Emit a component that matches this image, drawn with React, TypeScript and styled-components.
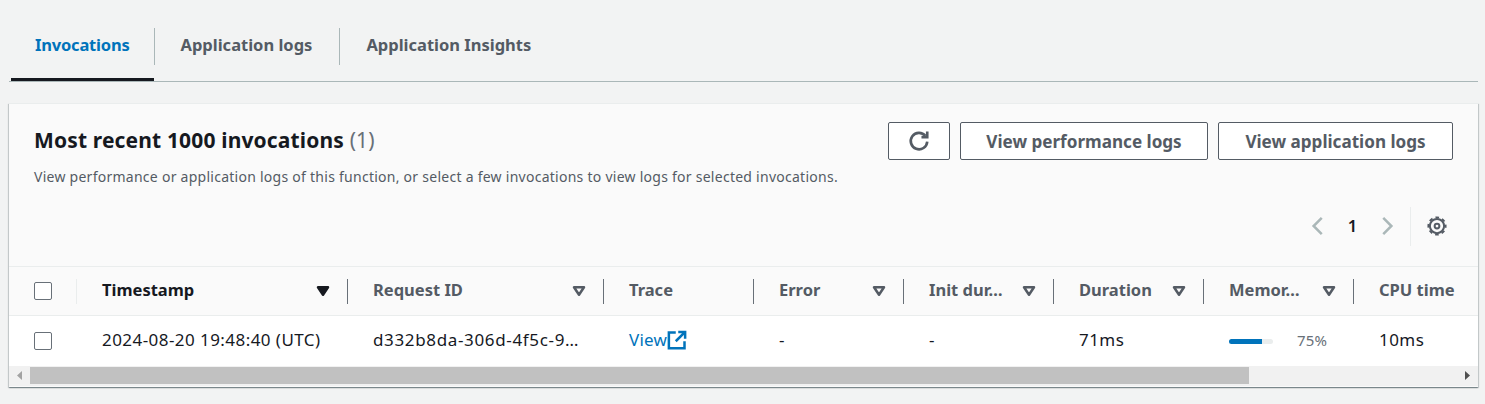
import React from "react";
import styled, { createGlobalStyle } from "styled-components";

const Global = createGlobalStyle`
  html, body { margin: 0; padding: 0; background: #f2f3f3; overflow: hidden; }
  body { font-family: "Noto Sans", "Open Sans", sans-serif; color: #16191f; }
  * { box-sizing: border-box; }
`;

const Page = styled.div`
  width: 1485px;
  height: 404px;
  padding: 28px 7px 0 9px;
`;

const TabBar = styled.div`
  display: flex;
  height: 54px;
  border-bottom: 1px solid #aab7b8;
  padding-left: 2px;
  margin-bottom: 21px;
`;

const Tab = styled.div<{ $active?: boolean; $last?: boolean }>`
  height: 53px;
  padding: 0 ${(p) => (p.$active ? 24 : 27)}px;
  line-height: 34px;
  font-size: 16.5px;
  font-weight: 700;
  letter-spacing: ${(p) => (p.$active ? -0.2 : 0)}px;
  white-space: nowrap;
  color: ${(p) => (p.$active ? "#0073bb" : "#545b64")};
  position: relative;
  border-bottom: 3px solid ${(p) => (p.$active ? "#16191f" : "transparent")};
  &::after {
    content: "";
    display: ${(p) => (p.$last ? "none" : "block")};
    position: absolute;
    right: -1px;
    top: 0;
    height: 37px;
    width: 1px;
    background: #aab7b8;
  }
`;

const Panel = styled.section`
  height: 284px;
  width: 1469px;
  background: #fafafa;
  box-shadow: 0 1px 1px 0 rgba(0, 28, 36, 0.3), 1px 1px 1px 0 rgba(0, 28, 36, 0.15), -1px 1px 1px 0 rgba(0, 28, 36, 0.15);
  border-top: 1px solid #eaeded;
  display: flex;
  flex-direction: column;
`;

const Head = styled.div`
  height: 163px;
  padding: 18px 25px 0 25px;
  border-bottom: 1px solid #eaeded;
`;

const HeadTop = styled.div`
  display: flex;
  justify-content: space-between;
  align-items: flex-start;
`;

const TitleBlock = styled.div`
  padding-top: 4px;
`;

const Title = styled.h2`
  margin: 0;
  font-size: 21px;
  line-height: 28px;
  font-weight: 700;
  letter-spacing: 0.15px;
  color: #16191f;
`;

const Count = styled.span`
  font-weight: 400;
  color: #687078;
`;

const Description = styled.p`
  margin: 15px 0 0;
  font-size: 14px;
  line-height: 16px;
  letter-spacing: 0.26px;
  color: #545b64;
`;

const Actions = styled.div`
  display: flex;
  gap: 10px;
`;

const Button = styled.button<{ $w: number }>`
  width: ${(p) => p.$w}px;
  height: 38px;
  border: 1px solid #545b64;
  border-radius: 2px;
  background: #fff;
  color: #545b64;
  font-family: inherit;
  font-size: 17.1px;
  font-weight: 700;
  padding: 0;
  display: flex;
  align-items: center;
  justify-content: center;
`;

const Tools = styled.div`
  display: flex;
  justify-content: flex-end;
  align-items: center;
  height: 39px;
  padding-bottom: 2px;
  margin: 22px 6px 0 0;
  color: #16191f;
`;

const PageNumber = styled.span`
  font-size: 16.5px;
  font-weight: 600;
  width: 49px;
  text-align: center;
`;

const ToolDivider = styled.span`
  align-self: flex-start;
  width: 1px;
  height: 39px;
  background: #eaeded;
  margin: 0 16px 0 13px;
`;

const Row = styled.div<{ $head?: boolean }>`
  display: grid;
  grid-template-columns: 68px 271px 256px 150px 150px 150px 150px 150px 1fr;
  height: ${(p) => (p.$head ? 49 : 50)}px;
  background: ${(p) => (p.$head ? "#fafafa" : "#fff")};
  border-bottom: ${(p) => (p.$head ? "1px solid #eaeded" : "none")};
  align-items: center;
`;

const HeadCell = styled.div<{ $active?: boolean; $noLine?: boolean }>`
  height: 25px;
  padding: 0 14px 0 25px;
  display: flex;
  align-items: center;
  justify-content: space-between;
  font-size: 16.5px;
  font-weight: 700;
  white-space: nowrap;
  color: ${(p) => (p.$active ? "#16191f" : "#545b64")};
  border-right: ${(p) => (p.$noLine ? "none" : "1px solid #687078")};
`;

const HeadLabel = styled.span`
  margin-bottom: 4px;
`;

const CheckCell = styled.div<{ $line?: boolean }>`
  height: 25px;
  padding-left: 25px;
  display: flex;
  align-items: center;
  border-right: ${(p) => (p.$line ? "1px solid #eaeded" : "none")};
`;

const Checkbox = styled.span`
  display: block;
  width: 18px;
  height: 18px;
  background: #fff;
  border: 1px solid #687078;
  border-radius: 2px;
`;

const Cell = styled.div<{ $spacing?: number }>`
  padding: 0 0 2px 25px;
  font-size: 17px;
  line-height: 24px;
  letter-spacing: ${(p) => p.$spacing ?? 0.44}px;
  color: #16191f;
  white-space: nowrap;
`;

const TraceLink = styled.a`
  display: inline-flex;
  align-items: center;
  color: #0073bb;
  letter-spacing: 0.2px;
`;

const MemoryCell = styled.div`
  display: flex;
  align-items: center;
  padding-left: 25px;
`;

const Track = styled.div`
  width: 44px;
  height: 5px;
  border-radius: 3px;
  background: #eaeded;
  overflow: hidden;
`;

const Fill = styled.div`
  height: 100%;
  background: #0073bb;
`;

const Percent = styled.span`
  margin-left: 24px;
  padding-bottom: 2px;
  font-size: 15px;
  letter-spacing: 0.2px;
  color: #687078;
`;

const Scrollbar = styled.div`
  height: 20px;
  background: #f1f1f1;
  display: flex;
  align-items: flex-start;
  padding-top: 1px;
`;

const ScrollArrow = styled.svg`
  flex: none;
`;

const Thumb = styled.div`
  width: 1219px;
  height: 17px;
  background: #c1c1c1;
  margin: 0 auto 0 0;
`;

const Caret = ({ filled }: { filled?: boolean }) => (
  <svg width="20" height="20" viewBox="0 0 16 16">
    <path
      d="M4 5h8l-4 6z"
      fill={filled ? "#16191f" : "none"}
      stroke={filled ? "#16191f" : "#545b64"}
      strokeWidth="2"
      strokeLinejoin="round"
    />
  </svg>
);

const Refresh = () => (
  <svg width="22" height="22" viewBox="0 0 16 16" fill="none" stroke="#545b64" strokeWidth="1.9">
    <path d="M14 8.5a6 6 0 1 1-1.3-4.2" />
    <path d="M14 1v4.2H9.8" />
  </svg>
);

const Chevron = ({ dir }: { dir: "left" | "right" }) => (
  <svg width="20" height="20" viewBox="0 0 16 16" fill="none" stroke="#aab7b8" strokeWidth="2">
    <path d={dir === "left" ? "M11 1.5 4.5 8l6.5 6.5" : "M5 1.5 11.5 8 5 14.5"} />
  </svg>
);

const Gear = () => (
  <svg width="20" height="20" viewBox="0 0 16 16" fill="none" stroke="#545b64" strokeWidth="1.6">
    <circle cx="8" cy="8" r="5.7" />
    <circle cx="8" cy="8" r="6.9" strokeWidth="1.5" strokeDasharray="2.9 2.52" strokeDashoffset="1.45" />
    <circle cx="8" cy="8" r="1.9" />
  </svg>
);

const External = () => (
  <svg width="20" height="20" viewBox="0 0 16 16" fill="none" stroke="#0073bb" strokeWidth="2">
    <path d="M7 2H1.5v12.5H14V9" />
    <path d="M9 1.5h5.5V7M14.5 1.5 7 9" />
  </svg>
);

const columns = ["Request ID", "Trace", "Error", "Init dur…", "Duration", "Memor…"];

export default function App() {
  return (
    <Page>
      <Global />
      <TabBar>
        <Tab $active>Invocations</Tab>
        <Tab>Application logs</Tab>
        <Tab $last>Application Insights</Tab>
      </TabBar>
      <Panel>
        <Head>
          <HeadTop>
            <TitleBlock>
              <Title>
                Most recent 1000 invocations <Count>(1)</Count>
              </Title>
              <Description>
                View performance or application logs of this function, or select a few invocations to view logs for selected invocations.
              </Description>
            </TitleBlock>
            <Actions>
              <Button $w={62} aria-label="Refresh">
                <Refresh />
              </Button>
              <Button $w={248}>View performance logs</Button>
              <Button $w={235}>View application logs</Button>
            </Actions>
          </HeadTop>
          <Tools>
            <Chevron dir="left" />
            <PageNumber>1</PageNumber>
            <Chevron dir="right" />
            <ToolDivider />
            <Gear />
          </Tools>
        </Head>
        <Row $head>
          <CheckCell $line>
            <Checkbox />
          </CheckCell>
          <HeadCell $active>
            <HeadLabel>Timestamp</HeadLabel>
            <Caret filled />
          </HeadCell>
          {columns.map((c) => (
            <HeadCell key={c}>
              <HeadLabel>{c}</HeadLabel>
              {c !== "Trace" && <Caret />}
            </HeadCell>
          ))}
          <HeadCell $noLine>
            <HeadLabel>CPU time</HeadLabel>
          </HeadCell>
        </Row>
        <Row>
          <CheckCell>
            <Checkbox />
          </CheckCell>
          <Cell>2024-08-20 19:48:40 (UTC)</Cell>
          <Cell $spacing={0.65}>d332b8da-306d-4f5c-9…</Cell>
          <Cell>
            <TraceLink>
              View
              <External />
            </TraceLink>
          </Cell>
          <Cell>-</Cell>
          <Cell>-</Cell>
          <Cell>71ms</Cell>
          <MemoryCell>
            <Track>
              <Fill style={{ width: "75%" }} />
            </Track>
            <Percent>75%</Percent>
          </MemoryCell>
          <Cell>10ms</Cell>
        </Row>
        <Scrollbar>
          <ScrollArrow width="21" height="17" viewBox="0 0 21 17">
            <path d="M8 8.5 13 4v9z" fill="#a3a3a3" />
          </ScrollArrow>
          <Thumb />
          <ScrollArrow width="21" height="17" viewBox="0 0 21 17">
            <path d="M13 8.5 8 4v9z" fill="#505050" />
          </ScrollArrow>
        </Scrollbar>
      </Panel>
    </Page>
  );
}
